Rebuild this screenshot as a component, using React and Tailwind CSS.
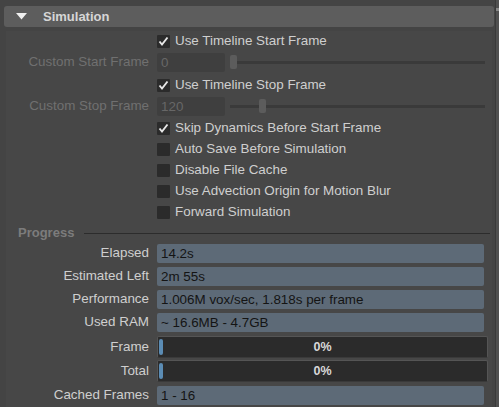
import React from "react";

const font = { fontFamily: '"Liberation Sans", Arial, sans-serif' };

function Check({ checked }) {
  return (
    <div className="w-[13px] h-[13px] bg-[#2b2b2b] rounded-[1px] flex items-center justify-center shrink-0">
      {checked && (
        <svg width="11" height="11" viewBox="0 0 11 11">
          <polyline points="1.5,5.5 4,8.5 9.5,1.5" fill="none" stroke="#e8e8e8" strokeWidth="1.9" />
        </svg>
      )}
    </div>
  );
}

function CheckRow({ label, checked, h = "h-[21px]", extra = "" }) {
  return (
    <div className={`flex items-center ${h} ${extra}`}>
      <div className="w-[151px] shrink-0" />
      <Check checked={checked} />
      <span className="ml-[5px] text-[13.4px] text-[#cfcfcf]">{label}</span>
    </div>
  );
}

function SliderRow({ label, value, handle, extra }) {
  return (
    <div className={`flex items-center h-[19px] ${extra}`}>
      <div className="w-[143px] shrink-0 text-right text-[13.4px] text-[#707070]">{label}</div>
      <div className="ml-[8px] w-[68px] h-[19px] bg-[#3f3f3f] rounded-[2px] text-[13.4px] text-[#676767] pl-[4px] leading-[19px]">{value}</div>
      <div className="relative ml-[5px] w-[255px] h-[19px] flex items-center">
        <div className="w-full h-[3px] bg-[#3a3a3a]" />
        <div className={`absolute top-[2px] ${handle} w-[7px] h-[14px] bg-[#5c5c5c] rounded-[2px]`} />
      </div>
    </div>
  );
}

function InfoRow({ label, value, extra }) {
  return (
    <div className={`flex items-center h-[19px] ${extra}`}>
      <div className="w-[143px] shrink-0 text-right text-[13.4px] text-[#cfcfcf]">{label}</div>
      <div className="ml-[8px] w-[327px] h-[19px] bg-[#5d6a77] rounded-[2px] text-[13.4px] text-[#141414] pl-[4px] leading-[19px]">{value}</div>
    </div>
  );
}

function BarRow({ label, extra }) {
  return (
    <div className={`flex items-center h-[22px] ${extra}`}>
      <div className="w-[143px] shrink-0 text-right text-[13.4px] text-[#cfcfcf]">{label}</div>
      <div className="relative ml-[8px] w-[331px] h-[22px] bg-[#2b2b2b] rounded-[2px] border border-[#555] border-b-[#3a3a3a] flex items-center justify-center">
        <div className="absolute left-[1px] top-[2px] w-[4px] h-[16px] bg-[#5b8cb4] rounded-[2px]" />
        <span className="text-[12.5px] font-bold text-[#d8d8d8]">0%</span>
      </div>
    </div>
  );
}

export default function App() {
  return (
    <div className="w-[499px] h-[407px] bg-[#444444] overflow-hidden flex" style={font}>
      <div className="w-[495px] shrink-0 flex flex-col">
        <div className="mt-[6px] ml-[4px] w-[490px] h-[21px] bg-[#5d5d5d] rounded-[3px] flex items-center">
          <svg width="11" height="7" viewBox="0 0 11 7" className="ml-[12px]">
            <polygon points="0,0 11,0 5.5,6.5" fill="#f0f0f0" />
          </svg>
          <span className="ml-[16px] text-[13px] font-bold text-[#d6d6d6]">Simulation</span>
        </div>
        <div className="mt-[4px] ml-[6px] w-[486px] flex-1 bg-[#474747] flex flex-col">
          <CheckRow label="Use Timeline Start Frame" checked h="h-[20px]" />
          <SliderRow label="Custom Start Frame" value="0" handle="left-0" extra="mt-[2px]" />
          <CheckRow label="Use Timeline Stop Frame" checked h="h-[20px]" extra="mt-[3px]" />
          <SliderRow label="Custom Stop Frame" value="120" handle="left-[29px]" extra="mt-[2px]" />
          <CheckRow label="Skip Dynamics Before Start Frame" checked extra="mt-[2px]" />
          <CheckRow label="Auto Save Before Simulation" />
          <CheckRow label="Disable File Cache" />
          <CheckRow label="Use Advection Origin for Motion Blur" />
          <CheckRow label="Forward Simulation" />
          <div className="h-[20px] flex items-center">
            <span className="ml-[12px] text-[13px] font-bold text-[#7c7c7c]">Progress</span>
            <div className="ml-[10px] flex-1 border-t border-[#2c2c2c] mr-[2px]" />
          </div>
          <InfoRow label="Elapsed" value="14.2s" extra="mt-[1px]" />
          <InfoRow label="Estimated Left" value="2m 55s" extra="mt-[4px]" />
          <InfoRow label="Performance" value="1.006M vox/sec, 1.818s per frame" extra="mt-[4px]" />
          <InfoRow label="Used RAM" value="~ 16.6MB - 4.7GB" extra="mt-[4px]" />
          <BarRow label="Frame" extra="mt-[4px]" />
          <BarRow label="Total" extra="mt-[2px]" />
          <InfoRow label="Cached Frames" value="1 - 16" extra="mt-[4px]" />
        </div>
      </div>
      <div className="w-[1px] bg-[#3a3a3a]" />
      <div className="w-[3px] bg-[#505050] flex flex-col items-center pt-[8px]">
        <div className="w-[3px] h-[3px] bg-[#888]" />
      </div>
    </div>
  );
}
